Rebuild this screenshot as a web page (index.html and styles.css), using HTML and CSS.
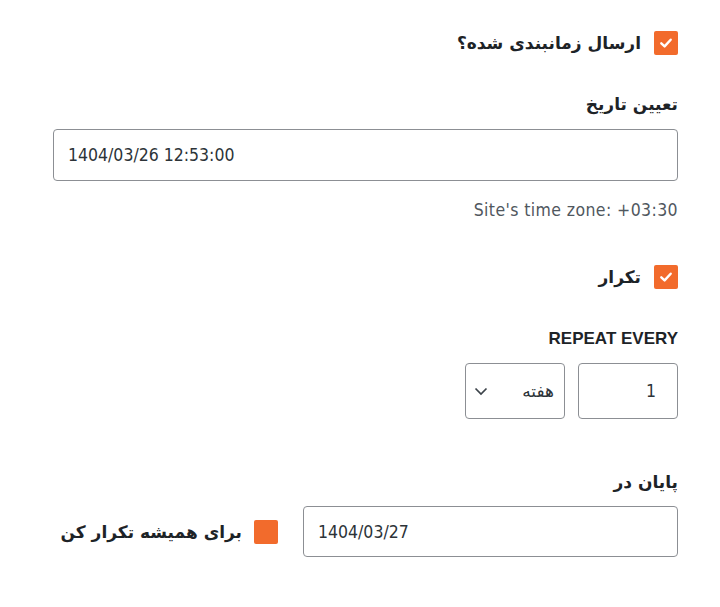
FILE: index.html
```html
<!DOCTYPE html>
<html lang="fa" dir="rtl">
<head>
  <meta charset="UTF-8">
  <title>ارسال زمانبندی شده</title>
  <link rel="stylesheet" href="styles.css">
</head>
<body>

  <div class="panel">
    <label class="check-row">
      <span class="box checked">
        <svg width="14" height="14" viewBox="0 0 14 14"><path d="M2.3 7.3 L5.6 10.4 L11.7 3.7" fill="none" stroke="#fff" stroke-width="2.4" stroke-linecap="round" stroke-linejoin="round"/></svg>
      </span>
      <span class="check-text">ارسال زمانبندی شده؟</span>
    </label>

    <div class="field date-field">
      <div class="field-label">تعیین تاریخ</div>
      <input type="text" class="text-input ltr" value="1404/03/26 12:53:00">
      <div class="hint" dir="ltr">Site's time zone: +03:30</div>
    </div>

    <label class="check-row repeat-row">
      <span class="box checked">
        <svg width="14" height="14" viewBox="0 0 14 14"><path d="M2.3 7.3 L5.6 10.4 L11.7 3.7" fill="none" stroke="#fff" stroke-width="2.4" stroke-linecap="round" stroke-linejoin="round"/></svg>
      </span>
      <span class="check-text">تکرار</span>
    </label>

    <div class="field repeat-field">
      <div class="field-label latin">REPEAT EVERY</div>
      <div class="repeat-inputs">
        <input type="text" class="num-input" value="1">
        <div class="select-wrap">
          <select class="unit-select">
            <option>هفته</option>
            <option>روز</option>
            <option>ماه</option>
          </select>
          <svg class="chevron" width="14" height="9" viewBox="0 0 14 9"><path d="M1.5 1.5 L7 7 L12.5 1.5" fill="none" stroke="#3c434a" stroke-width="1.7"/></svg>
        </div>
      </div>
    </div>

    <div class="field end-field">
      <div class="field-label">پایان در</div>
      <div class="end-row">
        <input type="text" class="text-input end-input ltr" value="1404/03/27">
        <label class="check-row forever">
          <span class="box"></span>
          <span class="check-text">برای همیشه تکرار کن</span>
        </label>
      </div>
    </div>
  </div>

</body>
</html>
```

FILE: styles.css
```css
* {
  box-sizing: border-box;
}
body {
  margin: 0;
  background: #fff;
  color: #1d2327;
  font-family: 'DejaVu Sans', 'Liberation Sans', sans-serif;
}

.panel {
  width: 625px;
  margin-right: 42px;
  padding-top: 31px;
}

.check-row {
  display: flex;
  align-items: center;
  gap: 13px;
  height: 24px;
}
.box {
  width: 24px;
  height: 24px;
  border-radius: 2px;
  background: #f26b2c;
  display: flex;
  align-items: center;
  justify-content: center;
  flex-shrink: 0;
}
.check-text {
  font-size: 17px;
  font-weight: bold;
  color: #1d2327;
}

.field-label {
  font-size: 17px;
  font-weight: bold;
  height: 24px;
  line-height: 24px;
}
.field-label.latin {
  font-family: 'Liberation Sans', sans-serif;
  font-size: 17px;
}

/* latin values in inputs and hint */
.text-input,
.num-input,
.hint {
  font-family: 'DejaVu Sans Condensed', 'DejaVu Sans', sans-serif;
  font-stretch: condensed;
  font-size: 17.5px;
}

.date-field {
  margin-top: 37px;
}
.text-input {
  display: block;
  width: 100%;
  height: 52px;
  margin-top: 13px;
  padding: 0 14px;
  border: 1px solid #8c8f94;
  border-radius: 4px;
  color: #2c3338;
  background: #fff;
}
.ltr {
  direction: ltr;
  text-align: left;
}
.hint {
  margin-top: 19px;
  line-height: 20px;
  letter-spacing: 0.4px;
  color: #50575e;
  text-align: right;
}

.repeat-row {
  margin-top: 45px;
}

.repeat-field {
  margin-top: 38px;
}
.repeat-inputs {
  display: flex;
  gap: 13px;
  margin-top: 12px;
}
.num-input {
  width: 100px;
  height: 56px;
  padding: 0 21px;
  border: 1px solid #8c8f94;
  border-radius: 4px;
  color: #2c3338;
  text-align: right;
  direction: ltr;
}
.select-wrap {
  position: relative;
}
.unit-select {
  appearance: none;
  -webkit-appearance: none;
  width: 100px;
  height: 56px;
  padding: 0 10px 0 30px;
  border: 1px solid #8c8f94;
  border-radius: 4px;
  background: #fff;
  font-family: 'DejaVu Sans', sans-serif;
  font-size: 17px;
  color: #2c3338;
}
.chevron {
  position: absolute;
  left: 9px;
  top: 24px;
  pointer-events: none;
}

.end-field {
  margin-top: 51px;
}
.end-row {
  display: flex;
  align-items: center;
  gap: 25px;
  margin-top: 12px;
}
.end-input {
  width: 375px;
  height: 51px;
  margin-top: 0;
}
.forever {
  gap: 12px;
}
```
